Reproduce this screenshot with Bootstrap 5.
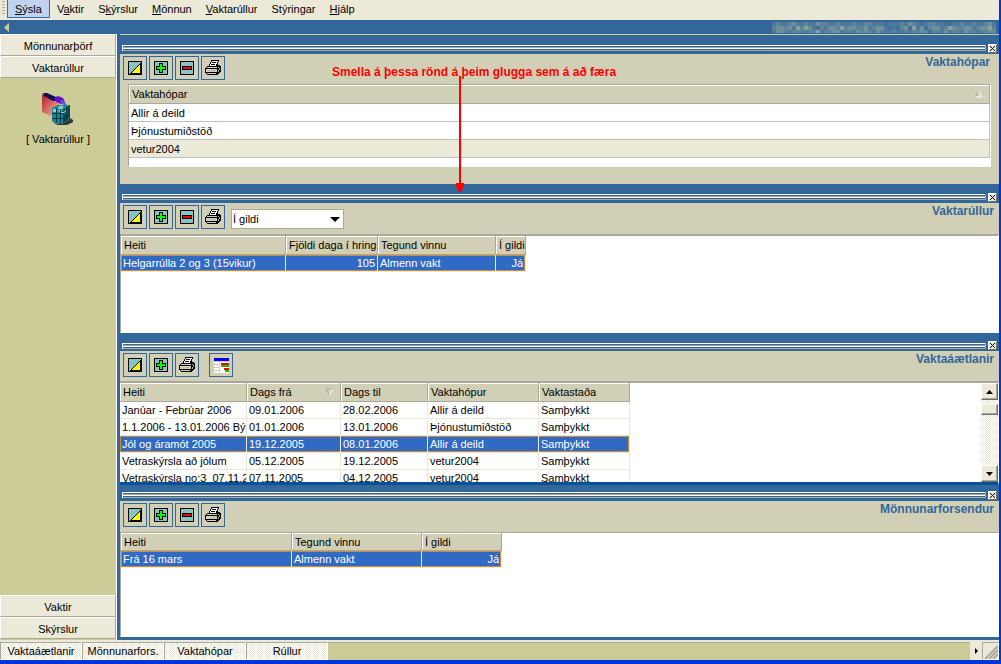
<!DOCTYPE html>
<html lang="is">
<head>
<meta charset="utf-8">
<meta name="viewport" content="width=device-width, initial-scale=1">
<title>Vaktarúllur</title>
<link href="https://cdn.jsdelivr.net/npm/bootstrap@5.3.0/dist/css/bootstrap.min.css" rel="stylesheet">
<style>
:root{--face:#ece9d8;--panel:#d1d0b6;--blue:#336699;--khaki:#cccc99;--shade:#aca899;--sel:#316ac5;--ring:#c88c3c;--frame:#0033dd}
body{font:11px/16px "Liberation Sans",Arial,sans-serif;color:#000;background:var(--blue);overflow:hidden}
button,select{font:inherit;color:inherit;padding:0;border-radius:0}
.app{border-right:2px solid var(--frame);border-bottom:4px solid var(--frame)}
.menubar{height:20px;background:var(--face);padding-left:2px}
.menubar .handle{width:3px;height:14px;margin:1px 2px 0 0;background:repeating-linear-gradient(var(--shade) 0 1px,var(--face) 1px 3px)}
.menubar a{color:#000;text-decoration:none;height:18px;line-height:18px;padding:0 6px;border:1px solid transparent;border-top:0}
.menubar a.active{background:#c1d2ee;border-color:var(--sel);padding:0 7px}
.menubar u{text-underline-offset:1px}
.titlebar{height:14px;padding:0 3px 0 4px}
.side{width:117px;background:var(--khaki);border-right:1px solid #fff}
.side button{height:22px;padding-top:1px;background:var(--face);border:1px solid;border-color:#fff var(--shade) var(--shade) #fff;text-align:center}
.side a{color:#000;text-decoration:none;margin-top:14px}
.side a svg{margin-bottom:5px}
.work{margin-left:3px;border-top:1px solid var(--khaki);padding-bottom:3px}
.pane{flex:149 1 0;min-height:0}
.pane-last{flex-grow:155}
.pane-head{height:19px;padding:7px 2px 0;gap:2px}
.grip{height:6px;border-left:1px solid #fff;border-right:1px solid var(--shade);background:linear-gradient(#fff 0 1px,var(--blue) 1px 2px,var(--shade) 2px 3px,#fff 3px 4px,var(--blue) 4px 5px,var(--shade) 5px)}
.shut{width:9px;height:9px;background:var(--face);border:1px solid;border-color:#fff #716f64 #716f64 #fff}
.pane-body{background:var(--panel);min-height:0}
.tools{height:31px;padding:2px 5px 0 3px;gap:2px}
.pane:first-child .tools{height:30px}
.tools button{width:24px;height:24px;border:1px solid var(--blue);background:var(--panel)}
.tools h2{font-size:12px;line-height:16px;font-weight:bold;color:var(--blue);margin:-2px 0 0}
.picker{padding-top:4px}
.picker select{width:113px;height:20px;background:#fff;border:1px solid var(--shade);appearance:none;padding-left:1px}
.picker::after{content:"";position:absolute;right:4px;top:12px;width:10px;height:5px;background:#000;clip-path:polygon(0 0,100% 0,50% 100%);pointer-events:none}
.sheet{background:#fff;overflow:hidden;min-height:0;border:1px solid;border-color:var(--shade) #fff #fff var(--shade)}
.rolls{border-top-width:2px}
.sheet table{table-layout:fixed;border-collapse:separate;border-spacing:0}
.sheet th,.sheet td{height:17px;line-height:16px;padding:0 2px;white-space:nowrap;overflow:hidden;border:0 solid var(--face);border-width:0 1px 1px 0}
.sheet th{height:18px;font-weight:normal;background:var(--panel);border-color:var(--shade);box-shadow:inset 1px 1px #fff;padding-left:3px}
.sheet td:first-child{padding-right:0}
.sheet .picked td{background:var(--sel);color:#fff;box-shadow:inset 0 1px var(--ring),inset 0 -1px var(--ring)}
.sheet .picked td:first-child{box-shadow:inset 0 1px var(--ring),inset 0 -1px var(--ring),inset 1px 0 var(--ring)}
.sheet .picked td:last-child{box-shadow:inset 0 1px var(--ring),inset 0 -1px var(--ring),inset -1px 0 var(--ring)}
.rolls th,.plans th,.groups th{height:19px}
.groups{margin:0 8px 17px}
.groups td{height:18px;border-color:#c0c0c0}
.groups .alt td{background:var(--face)}
.plans{border-left:0;border-top-width:2px;border-bottom:3px solid #00529b;margin-bottom:-3px}
.scroll{width:17px;background:repeating-conic-gradient(#fff 0 25%,var(--face) 0 50%) 0 0/2px 2px}
.scroll button,.scroll .thumb{border:1px solid;border-color:#fff #716f64 #716f64 #fff;background:var(--face);box-shadow:inset -1px -1px var(--shade)}
.scroll button{height:17px;line-height:0}
.scroll .thumb{height:11px;margin-top:4px}
.note{left:212px;top:30px;color:#f00;font-size:12px;font-weight:bold;line-height:14px;white-space:nowrap;z-index:2}
.note svg{display:block;margin:-3px 0 0 123px}
.status{height:20px;background:var(--face);padding-top:2px}
.status button{width:82px;border:1px solid;border-color:var(--shade) #fff #fff var(--shade);background:repeating-conic-gradient(#fff 0 25%,var(--face) 0 50%) 0 0/2px 2px}
.status .track{background:var(--khaki);border-top:1px solid var(--shade)}
.status .next{width:12px;background:var(--face);border:0}
.status .corner{width:17px;border:1px solid;border-color:var(--shade) #fff #fff var(--shade)}
svg{display:block}
button svg{margin:auto}
</style>
</head>
<body>
<svg width="0" height="0" class="position-absolute" shape-rendering="crispEdges">
<symbol id="edit" viewBox="0 0 14 14"><path fill="#000" d="M0 0h14v14H0z"/><path fill="#87c3c3" d="M1 1h12v12H1z"/><path fill="#ff0" d="M12 3v9H3z"/><path stroke="#000" d="M2 12.5h10.5V2M2.5 12.5l10-10" fill="none"/></symbol>
<symbol id="add" viewBox="0 0 14 14"><path fill="#000" d="M0 0h14v14H0z"/><path fill="#87c3c3" d="M1 1h12v12H1z"/><path fill="#000" d="M5 2h4v3h3v4H9v3H5V9H2V5h3z"/><path fill="#0f0" d="M6 3h2v3h3v2H8v3H6V8H3V6h3z"/></symbol>
<symbol id="remove" viewBox="0 0 14 14"><path fill="#000" d="M0 0h14v14H0z"/><path fill="#87c3c3" d="M1 1h12v12H1z"/><path fill="#000" d="M2 5h10v4H2z"/><path fill="#f00" d="M3 6h8v2H3z"/></symbol>
<symbol id="print" viewBox="0 0 17 16"><path fill="#000" d="M6 0h8v2h-1v3h2v1h1v6h-1v1h-1v1h-1v1H2v-1H1v-1H0V8h1V7h1V6h2V4h1V2h1z"/><path fill="#fff" d="M7 1h6v1h-1v2h-1v2H5V4h1V2h1z"/><path stroke="#000" d="M7 2.5h4M6 4.500h4" /><path fill="#d1d0b6" d="M3 7h9v1H2V7zM1 9h11v3H1zM2 13h9v1H2z"/><path fill="#aca899" d="M13 7h1v1h-1zM13 10h1v2h-1zM14 8h1v2h-1zM7 10h3v1H7z"/></symbol>
<symbol id="chart" viewBox="0 0 15 15"><path fill="#00f" d="M0 0h15v3H0z"/><path fill="#fff" d="M0 4h15v11H0z"/><path fill="#d1d0b6" d="M5 3h1v12H5zM0 6h5v1H0zM0 9h5v1H0zM0 12h5v1H0z"/><path fill="#f00" d="M7 5h8v2H7zM10 10h5v2h-5z"/><path fill="#0c0" d="M7 7h8v2H7zM11 12h4v2h-4z"/></symbol>
<symbol id="x" viewBox="0 0 7 7"><path fill="#000" d="M1 1h1v1h1v1h1V2h1V1h1v1H5v1H4v1h1v1h1v1H5V5H4V4H3v1H2v1H1V5h1V4h1V3H2V2H1z"/></symbol>
</svg>
<div class="app d-flex flex-column vh-100">
<nav class="menubar d-flex" aria-label="Valmynd">
<span class="handle"></span>
<a href="#" class="active"><u>S</u>ýsla</a><a href="#">V<u>a</u>ktir</a><a href="#">S<u>k</u>ýrslur</a><a href="#"><u>M</u>önnun</a><a href="#"><u>V</u>aktarúllur</a><a href="#">Stýringar</a><a href="#"><u>H</u>jálp</a>
</nav>
<header class="titlebar d-flex justify-content-between align-items-center">
<svg width="5" height="9" viewBox="0 0 5 9"><path fill="#cccc99" d="M5 0v9L0 4.500z"/></svg>
<svg id="owner" width="224" height="11" viewBox="0 0 224 11" shape-rendering="crispEdges" aria-hidden="true"></svg>
</header>
<div class="d-flex flex-grow-1" style="min-height:0">
<aside class="side d-flex flex-column flex-shrink-0">
<button type="button">Mönnunarþörf</button>
<button type="button">Vaktarúllur</button>
<a href="#" class="text-center">
<svg class="mx-auto" width="32" height="34" viewBox="0 0 32 34">
<defs><linearGradient id="rose" x1="0" y1="0" x2="1" y2="1"><stop stop-color="#b81c24"/><stop offset="1" stop-color="#f4c8b4"/></linearGradient></defs>
<path fill="url(#rose)" d="M0 2l19 11-6 13L0 20z"/>
<path fill="#333" d="M25 29l3-3 3 2v2l-6 3H14l5-3z"/>
<path fill="#101050" d="M1 1h4l9 4v4h-3L2 4z"/>
<path fill="#6a0ccc" d="M12 6l4-2 5 2 2 4-4 2-5-2z"/><path fill="#5b5bd6" d="M18 8l4 1 4 6-6-3z"/>
<path fill="#24828e" d="M10 16l6-3h12v12l-6 7H13l-3-3z"/><path fill="#0b4c5a" d="M21 18l7-5v13l-7 6z"/>
<path fill="#7ed4dc" d="M11 17h4v3h-4zM17 14h5l-2 3h-4zM19 20h3l3-4v4l-3 2h-3zM16 18h4l-2 3z"/>
<path stroke="#073c48" d="M10 21.500h11M10 26.500h11M14.500 16v15M18.500 18v14M21 22l7-5M21 27l7-5M24.500 15v14" fill="none"/>
</svg>[ Vaktarúllur ]</a>
<div class="mt-auto d-grid">
<button type="button">Vaktir</button>
<button type="button">Skýrslur</button>
</div>
<div style="height:1px"></div>
</aside>
<main class="work d-flex flex-column flex-grow-1" style="min-width:0">

<section class="pane d-flex flex-column position-relative">
<div class="pane-head d-flex align-items-center"><div class="grip flex-grow-1"></div><button type="button" class="shut" aria-label="Loka"><svg width="7" height="7"><use href="#x"/></svg></button></div>
<div class="pane-body d-flex flex-column flex-grow-1">
<div class="tools d-flex">
<button type="button" aria-label="Breyta"><svg width="14" height="14"><use href="#edit"/></svg></button><button type="button" aria-label="Bæta við"><svg width="14" height="14"><use href="#add"/></svg></button><button type="button" aria-label="Eyða"><svg width="14" height="14"><use href="#remove"/></svg></button><button type="button" aria-label="Prenta"><svg width="17" height="16"><use href="#print"/></svg></button>
<h2 class="ms-auto pe-1">Vaktahópar</h2>
</div>
<div class="sheet groups flex-grow-1">
<table class="w-100">
<thead><tr><th><span class="d-flex justify-content-between align-items-center">Vaktahópar<svg class="me-1" width="9" height="8"><path d="M4.500 1L1 7.500" stroke="#aca899" fill="none"/><path d="M4.500 1L8 7H1" stroke="#fff" fill="none"/></svg></span></th></tr></thead>
<tbody><tr><td>Allir á deild</td></tr><tr><td>Þjónustumiðstöð</td></tr><tr class="alt"><td>vetur2004</td></tr></tbody>
</table>
</div>
</div>
<div class="note position-absolute">Smella á þessa rönd á þeim glugga sem á að færa<svg width="9" height="117"><path fill="#f00" d="M4 0h2v107h3v3l-3 6H4l-3-6v-3h3z"/></svg></div>
</section>

<section class="pane d-flex flex-column">
<div class="pane-head d-flex align-items-center"><div class="grip flex-grow-1"></div><button type="button" class="shut" aria-label="Loka"><svg width="7" height="7"><use href="#x"/></svg></button></div>
<div class="pane-body d-flex flex-column flex-grow-1">
<div class="tools d-flex">
<button type="button" aria-label="Breyta"><svg width="14" height="14"><use href="#edit"/></svg></button><button type="button" aria-label="Bæta við"><svg width="14" height="14"><use href="#add"/></svg></button><button type="button" aria-label="Eyða"><svg width="14" height="14"><use href="#remove"/></svg></button><button type="button" aria-label="Prenta"><svg width="17" height="16"><use href="#print"/></svg></button>
<label class="picker position-relative ms-1"><span class="visually-hidden">Staða</span><select><option>Í gildi</option><option>Allar</option></select></label>
<h2 class="ms-auto">Vaktarúllur</h2>
</div>
<div class="sheet rolls flex-grow-1">
<table style="width:405px">
<colgroup><col style="width:165px"><col style="width:92px"><col style="width:118px"><col style="width:30px"></colgroup>
<thead><tr><th>Heiti</th><th>Fjöldi daga í hring</th><th>Tegund vinnu</th><th>Í gildi</th></tr></thead>
<tbody><tr class="picked"><td>Helgarrúlla 2 og 3 (15vikur)</td><td class="text-end">105</td><td>Almenn vakt</td><td class="text-end">Já</td></tr></tbody>
</table>
</div>
</div>
</section>

<section class="pane d-flex flex-column">
<div class="pane-head d-flex align-items-center"><div class="grip flex-grow-1"></div><button type="button" class="shut" aria-label="Loka"><svg width="7" height="7"><use href="#x"/></svg></button></div>
<div class="pane-body d-flex flex-column flex-grow-1">
<div class="tools d-flex">
<button type="button" aria-label="Breyta"><svg width="14" height="14"><use href="#edit"/></svg></button><button type="button" aria-label="Bæta við"><svg width="14" height="14"><use href="#add"/></svg></button><button type="button" aria-label="Prenta"><svg width="17" height="16"><use href="#print"/></svg></button><button type="button" class="ms-2" aria-label="Yfirlit"><svg width="15" height="15"><use href="#chart"/></svg></button>
<h2 class="ms-auto">Vaktaáætlanir</h2>
</div>
<div class="sheet plans flex-grow-1 d-flex">
<div class="flex-grow-1 overflow-hidden">
<table style="width:510px">
<colgroup><col style="width:127px"><col style="width:94px"><col style="width:87px"><col style="width:111px"><col style="width:91px"></colgroup>
<thead><tr><th>Heiti</th><th><span class="d-flex justify-content-between align-items-center">Dags frá<svg class="me-1" width="9" height="8"><path d="M8 1H1l3.500 6" stroke="#aca899" fill="none"/><path d="M4.500 7L8 1" stroke="#fff" fill="none"/></svg></span></th><th>Dags til</th><th>Vaktahópur</th><th>Vaktastaða</th></tr></thead>
<tbody>
<tr><td>Janúar - Febrúar 2006</td><td>09.01.2006</td><td>28.02.2006</td><td>Allir á deild</td><td>Samþykkt</td></tr>
<tr><td>1.1.2006 - 13.01.2006 Býl</td><td>01.01.2006</td><td>13.01.2006</td><td>Þjónustumiðstöð</td><td>Samþykkt</td></tr>
<tr class="picked"><td>Jól og áramót 2005</td><td>19.12.2005</td><td>08.01.2006</td><td>Allir á deild</td><td>Samþykkt</td></tr>
<tr><td>Vetraskýrsla að jólum</td><td>05.12.2005</td><td>19.12.2005</td><td>vetur2004</td><td>Samþykkt</td></tr>
<tr><td>Vetraskýrsla no:3&nbsp; 07.11.2</td><td>07.11.2005</td><td>04.12.2005</td><td>vetur2004</td><td>Samþykkt</td></tr>
</tbody>
</table>
</div>
<div class="scroll d-flex flex-column flex-shrink-0">
<button type="button" aria-label="Upp"><svg width="7" height="4"><path d="M0 4h7L3.500 0z"/></svg></button>
<div class="thumb"></div>
<button type="button" class="mt-auto" aria-label="Niður"><svg width="7" height="4"><path d="M0 0h7L3.500 4z"/></svg></button>
</div>
</div>
</div>
</section>

<section class="pane pane-last d-flex flex-column">
<div class="pane-head d-flex align-items-center"><div class="grip flex-grow-1"></div><button type="button" class="shut" aria-label="Loka"><svg width="7" height="7"><use href="#x"/></svg></button></div>
<div class="pane-body d-flex flex-column flex-grow-1">
<div class="tools d-flex">
<button type="button" aria-label="Breyta"><svg width="14" height="14"><use href="#edit"/></svg></button><button type="button" aria-label="Bæta við"><svg width="14" height="14"><use href="#add"/></svg></button><button type="button" aria-label="Eyða"><svg width="14" height="14"><use href="#remove"/></svg></button><button type="button" aria-label="Prenta"><svg width="17" height="16"><use href="#print"/></svg></button>
<h2 class="ms-auto">Mönnunarforsendur</h2>
</div>
<div class="sheet flex-grow-1">
<table style="width:381px">
<colgroup><col style="width:171px"><col style="width:130px"><col style="width:80px"></colgroup>
<thead><tr><th>Heiti</th><th>Tegund vinnu</th><th>Í gildi</th></tr></thead>
<tbody><tr class="picked"><td>Frá 16 mars</td><td>Almenn vakt</td><td class="text-end">Já</td></tr></tbody>
</table>
</div>
</div>
</section>
</main>
</div>
<footer class="status d-flex">
<button type="button">Vaktaáætlanir</button><button type="button">Mönnunarfors.</button><button type="button">Vaktahópar</button><button type="button">Rúllur</button>
<div class="track flex-grow-1"></div>
<button type="button" class="next" aria-label="Áfram"><svg width="3" height="6"><path d="M0 0v6l3-3z"/></svg></button>
<div class="corner"><svg width="15" height="16" class="ms-auto"><path d="M2 16L15 3M6 16l9-9M10 16l5-5" stroke="#aca899" stroke-width="2"/></svg></div>
</footer>
</div>
<script src="https://cdn.jsdelivr.net/npm/bootstrap@5.3.0/dist/js/bootstrap.bundle.min.js"></script>
<script>
// Name of the signed-in user, shown pixelated: each digit is one tile's tone
const tones=['#41709a','#4d7a9c','#5c859c','#6e9199','#86a39a'];
const rows=['12112311211322112111211221110111213210122110011211211231',
'23323142431021332423322312331010230413023312432233123342',
'13321222122412233122132321321121121223202213122132212233'];
document.getElementById('owner').innerHTML=rows.map((r,y)=>[...r].map((d,x)=>`<rect x="${x*4}" y="${y*4}" width="4" height="4" fill="${tones[d]}"/>`).join('')).join('');
</script>
</body>
</html>
